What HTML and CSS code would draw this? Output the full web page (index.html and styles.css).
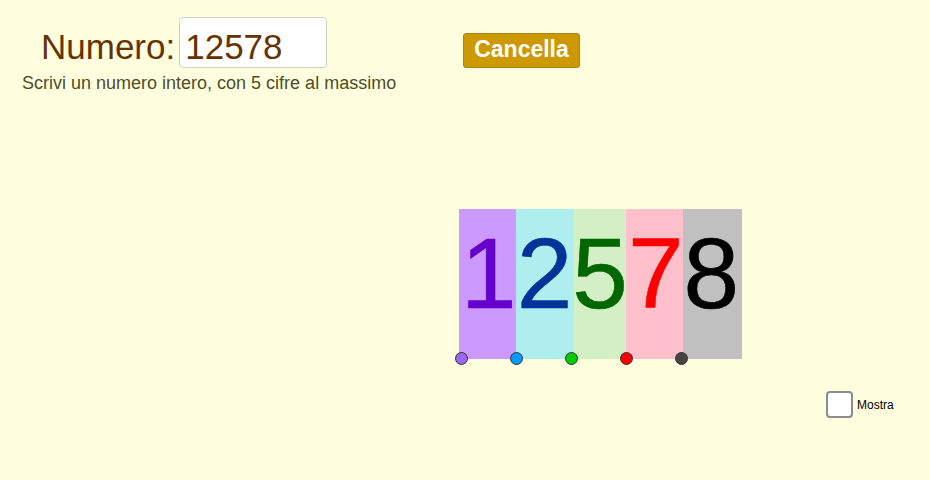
FILE: index.html
```html
<!DOCTYPE html>
<html lang="it">
<head>
<meta charset="utf-8">
<title>Numero</title>
<link rel="stylesheet" href="styles.css">
</head>
<body>
<div class="app">
  <div class="top">
    <div class="left">
      <div class="entry">
        <span class="label">Numero:</span>
        <div class="input">12578</div>
      </div>
      <div class="hint">Scrivi un numero intero, con 5 cifre al massimo</div>
    </div>
    <div class="btn">Cancella</div>
  </div>
  <div class="panel-wrap">
    <div class="panel">
      <div class="col c1"></div>
      <div class="col c2"></div>
      <div class="col c3"></div>
      <div class="col c4"></div>
      <div class="col c5"></div>
      <div class="digits"><span class="d1">1</span><span class="d2">2</span><span class="d3">5</span><span class="d4">7</span><span class="d5">8</span></div>
      <div class="dots">
        <span class="dot p1"></span>
        <span class="dot p2"></span>
        <span class="dot p3"></span>
        <span class="dot p4"></span>
        <span class="dot p5"></span>
      </div>
    </div>
  </div>
  <div class="check-row">
    <span class="box"></span>
    <span class="check-label">Mostra</span>
  </div>
</div>
</body>
</html>
```

FILE: styles.css
```css
html, body {
  margin: 0;
  padding: 0;
  background: #FFFFE0;
}
.app {
  width: 930px;
  height: 480px;
  overflow: hidden;
  font-family: "Liberation Sans", Arial, sans-serif;
}
.top {
  display: flex;
  align-items: flex-start;
}
.left {
  box-sizing: border-box;
  width: 463px;
  padding-left: 22px;
  padding-top: 17px;
}
.entry {
  display: flex;
  align-items: baseline;
  margin-left: 19px;
}
.label {
  font-size: 35px;
  color: #663300;
  margin-right: 4px;
}
.input {
  box-sizing: border-box;
  width: 148px;
  height: 51px;
  background: #fff;
  border: 1px solid #cfcfcf;
  border-radius: 4px;
  padding: 8px 0 0 5px;
  font-size: 35px;
  line-height: 41px;
  color: #663300;
}
.hint {
  margin-top: 4px;
  font-size: 18px;
  line-height: 22px;
  color: #4d4d26;
}
.btn {
  box-sizing: border-box;
  margin-top: 33px;
  width: 117px;
  height: 35px;
  padding-bottom: 2px;
  background: #CC9900;
  border: 1px solid #a8861f;
  border-radius: 3px;
  color: #fff;
  font-weight: bold;
  font-size: 23px;
  line-height: 31px;
  text-align: center;
}
.panel-wrap {
  padding-left: 459px;
  margin-top: 115px;
}
.panel {
  position: relative;
  display: flex;
  width: 283px;
  height: 150px;
}
.col { height: 100%; }
.c1 { width: 57px; background: #CC99FF; }
.c2 { width: 58px; background: #AFEEEE; }
.c3 { width: 52px; background: #D2F0C4; }
.c4 { width: 57px; background: #FFC0CB; }
.c5 { width: 59px; background: #C0C0C0; }
.digits {
  position: absolute;
  left: 2px;
  top: 14px;
  font-size: 100px;
  line-height: 100px;
  white-space: nowrap;
  -webkit-text-stroke: 0.6px currentColor;
}
.d1 { color: #6600CC; }
.d2 { color: #003399; }
.d3 { color: #006600; }
.d4 { color: #FF0000; }
.d5 { color: #000000; }
.dots {
  position: absolute;
  left: -4px;
  top: 143px;
  display: flex;
  gap: 42px;
}
.dot {
  box-sizing: border-box;
  width: 13px;
  height: 13px;
  border-radius: 50%;
  border: 1px solid #333;
}
.p1 { background: #9966FF; }
.p2 { background: #0099FF; }
.p3 { background: #00CC00; }
.p4 { background: #FF0000; }
.p5 { background: #444444; }
.check-row {
  display: flex;
  align-items: center;
  gap: 4px;
  margin-top: 32px;
  padding-left: 826px;
}
.box {
  box-sizing: border-box;
  width: 27px;
  height: 27px;
  background: #fff;
  border: 2px solid #8c8c8c;
  border-radius: 4px;
}
.check-label {
  font-size: 12px;
  line-height: 14px;
  color: #000;
}
```
